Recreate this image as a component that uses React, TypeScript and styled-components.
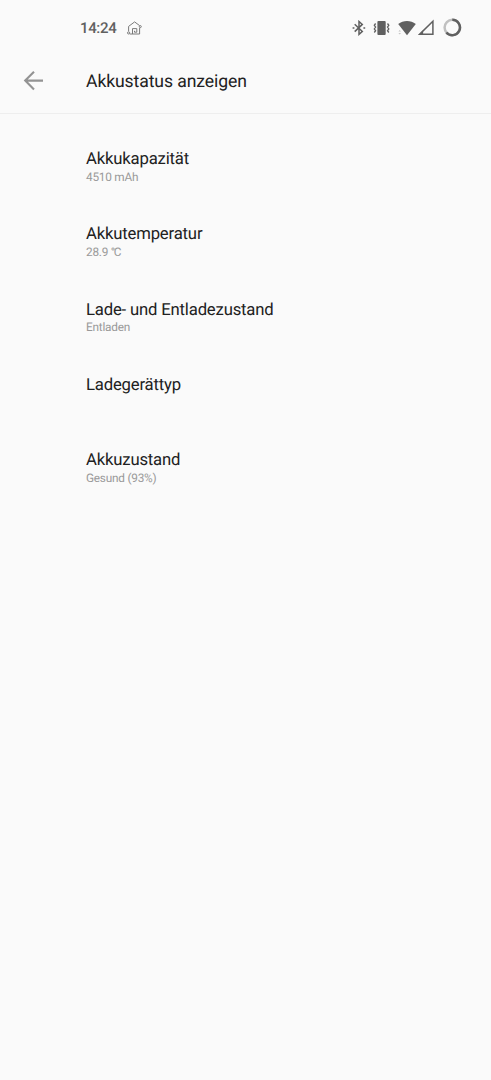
import React from 'react';
import styled, { createGlobalStyle } from 'styled-components';

const GlobalStyle = createGlobalStyle`
  * { box-sizing: border-box; }
  body {
    margin: 0;
    background: #fafafa;
    font-family: Roboto, "Noto Sans", sans-serif;
    text-rendering: geometricPrecision;
  }
`;

const Screen = styled.div`
  min-height: 1080px;
  background: #fafafa;
  color: #212121;
`;

const StatusBar = styled.header`
  display: flex;
  align-items: center;
  height: 48px;
  padding: 7px 29px 0 80px;
`;

const Clock = styled.span`
  width: 46px;
  font-size: 15px;
  line-height: 18px;
  font-weight: 500;
  letter-spacing: -0.35px;
  color: #606060;
  white-space: nowrap;
`;

const StatusIcon = styled.svg<{ $gap?: number }>`
  display: block;
  flex: none;
  margin-left: ${({ $gap = 0 }) => $gap}px;
`;

const StatusIcons = styled.div`
  display: flex;
  align-items: center;
  margin-left: auto;
`;

const AppBar = styled.div`
  display: flex;
  align-items: center;
  height: 66px;
  padding: 0 23px;
  border-bottom: 1px solid #eeeeee;
`;

const BackButton = styled.button`
  display: flex;
  justify-content: flex-start;
  width: 63px;
  height: 20px;
  padding: 0;
  border: 0;
  background: none;
`;

const Heading = styled.h1`
  margin: 2px 0 0;
  font-size: 17.6px;
  line-height: 22px;
  font-weight: 400;
  letter-spacing: -0.1px;
`;

const List = styled.main`
  display: flex;
  flex-direction: column;
  padding: 35.8px 24px 0 86px;
`;

const Row = styled.section`
  height: 75.4px;
`;

const RowTitle = styled.h2`
  margin: 0;
  font-size: 16.7px;
  line-height: 20px;
  font-weight: 400;
  letter-spacing: -0.18px;
`;

const RowValue = styled.p`
  margin: -0.3px 0 0;
  font-size: 11.8px;
  line-height: 15px;
  letter-spacing: -0.22px;
  color: #999999;
`;

const Unit = styled.span`
  letter-spacing: -1.4px;
`;

const entries = [
  { title: 'Akkukapazität', value: '4510 mAh' },
  { title: 'Akkutemperatur', value: <>28.9 <Unit>°C</Unit></> },
  { title: 'Lade- und Entladezustand', value: 'Entladen' },
  { title: 'Ladegerättyp', value: '' },
  { title: 'Akkuzustand', value: 'Gesund (93%)' },
];

const HomeIcon = () => (
  <StatusIcon width="17" height="16" viewBox="0 0 17 16" fill="none" stroke="#7a7a7a" strokeWidth="1">
    <path d="M2.6 11.2V6.4L8.6 1.9l5 3.7M13.6 8v6H3.8" />
    <path d="M6.5 14V8.6h4.3v3.6H8.5v-1.4" />
    <circle cx="14.3" cy="6.6" r="1" />
    <circle cx="2.6" cy="12.9" r="1.1" />
  </StatusIcon>
);

const BluetoothIcon = () => (
  <StatusIcon width="14" height="16" viewBox="0 0 14 16" fill="none" stroke="#606060" strokeWidth="1.5">
    <path d="M2.7 4.3l7.6 7.2L7 14.4V1.5l3.3 2.9-7.6 7.2" />
    <path d="M.6 8h1.8M11.4 8h1.8" strokeWidth="1.6" />
  </StatusIcon>
);

const VibrateIcon = () => (
  <StatusIcon $gap={7} width="17" height="16" viewBox="0 0 17 16">
    <rect x="4.4" y="1" width="8.3" height="14" rx="1" fill="#606060" />
    <path
      d="M2.6 3.5L1.3 5.3l1.3 1.8-1.3 1.8 1.3 1.8-1.3 1.8M14.5 3.5l1.3 1.8-1.3 1.8 1.3 1.8-1.3 1.8 1.3 1.8"
      fill="none"
      stroke="#606060"
      strokeWidth="1.3"
    />
  </StatusIcon>
);

const WifiIcon = () => (
  <StatusIcon $gap={8} width="18" height="16" viewBox="0.5 0 18 16">
    <path d="M.7 4C5.8-.1 13.2-.1 18.3 4L9.5 15.2z" fill="#606060" />
    <path d="M.9 11.6l1.3-1.6 1.3 1.6zM.9 13h2.6l-1.3 1.6z" fill="#c4c4c4" />
  </StatusIcon>
);

const SignalIcon = () => (
  <StatusIcon $gap={2} width="17" height="17" viewBox="0.4 0 17 17">
    <path d="M15.3 2.2v13H2.1z" fill="none" stroke="#606060" strokeWidth="1.5" />
    <path d="M5.5 11.3v3.9H2z" fill="#606060" />
  </StatusIcon>
);

const BatteryRing = () => (
  <StatusIcon $gap={8} width="19" height="19" viewBox="0.2 0 19 19" fill="none" strokeWidth="2.5">
    <circle cx="9.5" cy="9.5" r="7.7" stroke="#c0c0c0" />
    <path d="M9.5 1.8a7.7 7.7 0 1 1-5.9 12.7" stroke="#606060" />
  </StatusIcon>
);

export default function App() {
  return (
    <Screen>
      <GlobalStyle />
      <StatusBar>
        <Clock>14:24</Clock>
        <HomeIcon />
        <StatusIcons>
          <BluetoothIcon />
          <VibrateIcon />
          <WifiIcon />
          <SignalIcon />
          <BatteryRing />
        </StatusIcons>
      </StatusBar>
      <AppBar>
        <BackButton aria-label="Zurück">
          <svg width="21" height="20" viewBox="0 0 21 20" fill="none" stroke="#939393" strokeWidth="2.1">
            <path d="M20 9.6H2M11 .8L2.2 9.6l8.8 8.8" />
          </svg>
        </BackButton>
        <Heading>Akkustatus anzeigen</Heading>
      </AppBar>
      <List>
        {entries.map(({ title, value }) => (
          <Row key={title}>
            <RowTitle>{title}</RowTitle>
            {value && <RowValue>{value}</RowValue>}
          </Row>
        ))}
      </List>
    </Screen>
  );
}
